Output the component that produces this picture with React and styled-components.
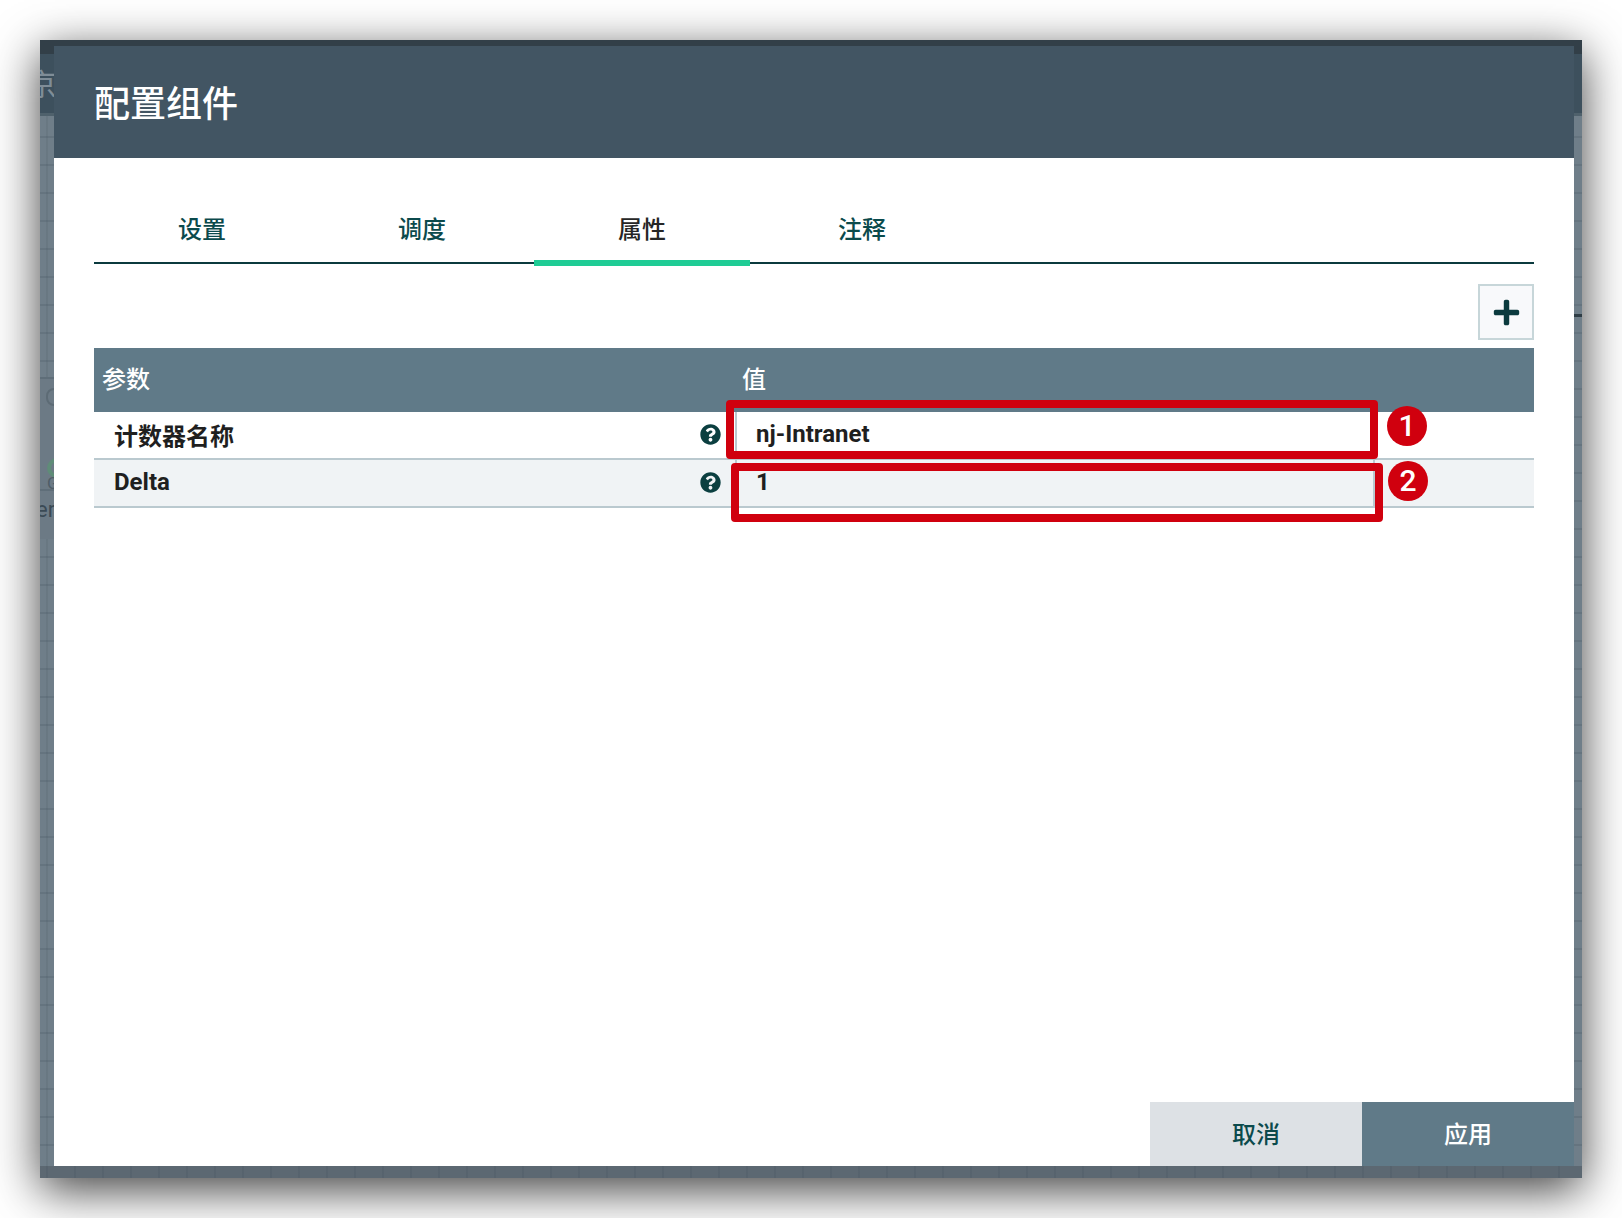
import React from 'react';
import styled, { createGlobalStyle } from 'styled-components';
import { FaPlus, FaQuestionCircle } from 'react-icons/fa';

const FONT = `Roboto, "Noto Sans CJK SC", "Noto Sans", sans-serif`;

const GlobalStyle = createGlobalStyle`
  html, body {
    margin: 0;
    padding: 0;
    background: #fff;
  }
  * {
    box-sizing: border-box;
  }
`;

const Page = styled.div`
  width: 1622px;
  height: 1218px;
  padding: 40px;
  overflow: hidden;
  font-family: ${FONT};
`;

const Window = styled.div`
  position: relative;
  width: 1542px;
  height: 1138px;
  box-shadow: 0 12px 44px rgba(0, 0, 0, 0.75);
`;

const Backdrop = styled.div`
  position: relative;
  display: flex;
  flex-direction: column;
  height: 100%;
  overflow: hidden;
`;

const BackdropTop = styled.div`
  height: 14px;
  background: #323f48;
`;

const BackdropHeader = styled.div`
  height: 62px;
  background: #3d505d;
  color: #7f8d97;
  font-size: 30px;
  line-height: 62px;
  text-indent: -13px;
  border-bottom: 3px solid #4f616c;
`;

const BackdropCanvas = styled.div`
  flex: 1;
  position: relative;
  background-color: #6f7e89;
  background-image:
    linear-gradient(to right, transparent 6px, rgba(60, 75, 85, 0.13) 6px, rgba(60, 75, 85, 0.13) 8px, transparent 8px),
    linear-gradient(to bottom, transparent 20px, rgba(60, 75, 85, 0.2) 20px, rgba(60, 75, 85, 0.2) 22px, transparent 22px);
  background-size: 28px 28px;
`;

const BottomStrip = styled.div`
  position: absolute;
  left: 0;
  right: 0;
  bottom: 0;
  height: 12px;
  background-color: #5c6872;
  background-image: linear-gradient(to right, transparent 6px, rgba(60, 75, 85, 0.16) 6px, rgba(60, 75, 85, 0.16) 8px, transparent 8px);
  background-size: 28px 28px;
`;

const FlowBand = styled.div`
  position: absolute;
  left: 0;
  top: ${(props) => props.$top}px;
  width: 14px;
  height: ${(props) => props.$height}px;
  background: #6c7a85;
  border-top: 2px solid #5f6e79;
`;

const FlowLabel = styled.span`
  position: absolute;
  left: -4px;
  top: 381px;
  color: #3b4a55;
  font-size: 22px;
  line-height: 26px;
`;

const FlowRing = styled.span`
  position: absolute;
  left: 7px;
  top: 342px;
  width: 20px;
  height: 20px;
  border: 4px solid #5f8c78;
  border-radius: 50%;
`;

const FlowG = styled.span`
  position: absolute;
  left: 7px;
  top: 357px;
  color: #4f5d67;
  font-size: 17px;
  line-height: 20px;
`;

const FlowLock = styled.span`
  position: absolute;
  left: 6px;
  top: 272px;
  width: 18px;
  height: 18px;
  border: 2px solid #5d6b75;
  border-radius: 8px;
`;

const FlowEdge = styled.div`
  position: absolute;
  right: 0;
  top: 198px;
  width: 8px;
  height: 3px;
  background: #2f3d46;
`;

const Dialog = styled.div`
  position: absolute;
  left: 14px;
  top: 6px;
  display: flex;
  flex-direction: column;
  width: 1520px;
  height: 1120px;
  background: #fff;
`;

const DialogHeader = styled.div`
  display: flex;
  align-items: center;
  flex-shrink: 0;
  height: 112px;
  padding: 0 0 2px 40px;
  background: #425563;
  color: #fff;
  font-size: 36px;
  font-weight: 500;
`;

const DialogBody = styled.div`
  flex: 1;
  padding: 0 40px;
`;

const Tabs = styled.div`
  display: flex;
  gap: 4px;
  height: 106px;
  padding-top: 56px;
  border-bottom: 2px solid #0b3a3e;
`;

const Tab = styled.div`
  position: relative;
  width: 216px;
  height: 48px;
  text-align: center;
  font-size: 24px;
  font-weight: 500;
  line-height: 32px;
  color: ${(props) => (props.$active ? '#262626' : '#0b4a4c')};

  ${(props) =>
    props.$active &&
    `
    &::after {
      content: '';
      position: absolute;
      left: 0;
      right: 0;
      bottom: -4px;
      height: 6px;
      background: #1fcc95;
    }
  `}
`;

const Toolbar = styled.div`
  display: flex;
  justify-content: flex-end;
  padding: 20px 0 8px;
`;

const AddButton = styled.button`
  display: flex;
  align-items: center;
  justify-content: center;
  width: 56px;
  height: 56px;
  padding: 0;
  border: 2px solid #c7d6d9;
  background: #f8f9fb;
  color: #0b3a3e;
`;

const HeaderRow = styled.div`
  display: grid;
  grid-template-columns: 639px 1fr;
  height: 64px;
  background: #607a88;
  color: #fff;
  font-size: 24px;
  font-weight: 500;
  line-height: 64px;
`;

const HeaderCell = styled.div`
  padding-left: ${(props) => props.$indent}px;
`;

const Row = styled.div`
  display: grid;
  grid-template-columns: 641px 640px 1fr;
  height: 48px;
  border-bottom: 2px solid #bac9cf;
  background: ${(props) => (props.$striped ? '#f0f3f5' : '#fff')};
  color: #1f1f1f;
  font-size: 24px;
  font-weight: 700;
`;

const NameCell = styled.div`
  display: flex;
  align-items: center;
  justify-content: space-between;
  padding: 0 14px 2px 20px;
`;

const HelpIcon = styled(FaQuestionCircle)`
  flex-shrink: 0;
  color: #0b3f40;
`;

const ValueCell = styled.div`
  padding: 6px 0 0 19px;
  border-left: 2px solid #bac9cf;
  border-right: 2px solid #bac9cf;
  line-height: 32px;
`;

const DialogFooter = styled.div`
  display: flex;
  justify-content: flex-end;
  flex-shrink: 0;
  height: 64px;
`;

const FooterButton = styled.button`
  width: 212px;
  border: 0;
  padding: 0 0 4px;
  font-family: ${FONT};
  font-size: 24px;
  font-weight: 500;
  background: ${(props) => (props.$primary ? '#607a88' : '#dde1e5')};
  color: ${(props) => (props.$primary ? '#fff' : '#0b4a4c')};
`;

const Callout = styled.div`
  position: absolute;
  left: ${(props) => props.$left}px;
  top: ${(props) => props.$top}px;
  width: 652px;
  height: 59px;
  border: 8px solid #d0000e;
  border-radius: 4px;
`;

const Badge = styled.div`
  position: absolute;
  left: ${(props) => props.$left}px;
  top: ${(props) => props.$top}px;
  width: 40px;
  height: 40px;
  border-radius: 50%;
  background: #d0000e;
  color: #fff;
  font-size: 30px;
  font-weight: 500;
  line-height: 40px;
  text-align: center;
`;

const tabs = ['设置', '调度', '属性', '注释'];

const properties = [
  { name: '计数器名称', value: 'nj-Intranet' },
  { name: 'Delta', value: '1', striped: true },
];

export default function App() {
  return (
    <Page>
      <GlobalStyle />
      <Window>
        <Backdrop>
          <BackdropTop />
          <BackdropHeader>京</BackdropHeader>
          <BackdropCanvas>
            <FlowBand $top={261} $height={112} />
            <FlowBand $top={373} $height={50} />
            <FlowLock />
            <FlowRing />
            <FlowG>G</FlowG>
            <FlowLabel>er</FlowLabel>
            <FlowEdge />
          </BackdropCanvas>
          <BottomStrip />
        </Backdrop>
        <Dialog>
          <DialogHeader>配置组件</DialogHeader>
          <DialogBody>
            <Tabs>
              {tabs.map((tab) => (
                <Tab key={tab} $active={tab === '属性'}>
                  {tab}
                </Tab>
              ))}
            </Tabs>
            <Toolbar>
              <AddButton aria-label="add">
                <FaPlus size={29} />
              </AddButton>
            </Toolbar>
            <HeaderRow>
              <HeaderCell $indent={8}>参数</HeaderCell>
              <HeaderCell $indent={9}>值</HeaderCell>
            </HeaderRow>
            {properties.map((item) => (
              <Row key={item.name} $striped={item.striped}>
                <NameCell>
                  {item.name}
                  <HelpIcon size={21} />
                </NameCell>
                <ValueCell>{item.value}</ValueCell>
              </Row>
            ))}
          </DialogBody>
          <DialogFooter>
            <FooterButton>取消</FooterButton>
            <FooterButton $primary>应用</FooterButton>
          </DialogFooter>
          <Callout $left={672} $top={354} />
          <Callout $left={677} $top={417} />
          <Badge $left={1333} $top={360}>1</Badge>
          <Badge $left={1334} $top={415}>2</Badge>
        </Dialog>
      </Window>
    </Page>
  );
}
